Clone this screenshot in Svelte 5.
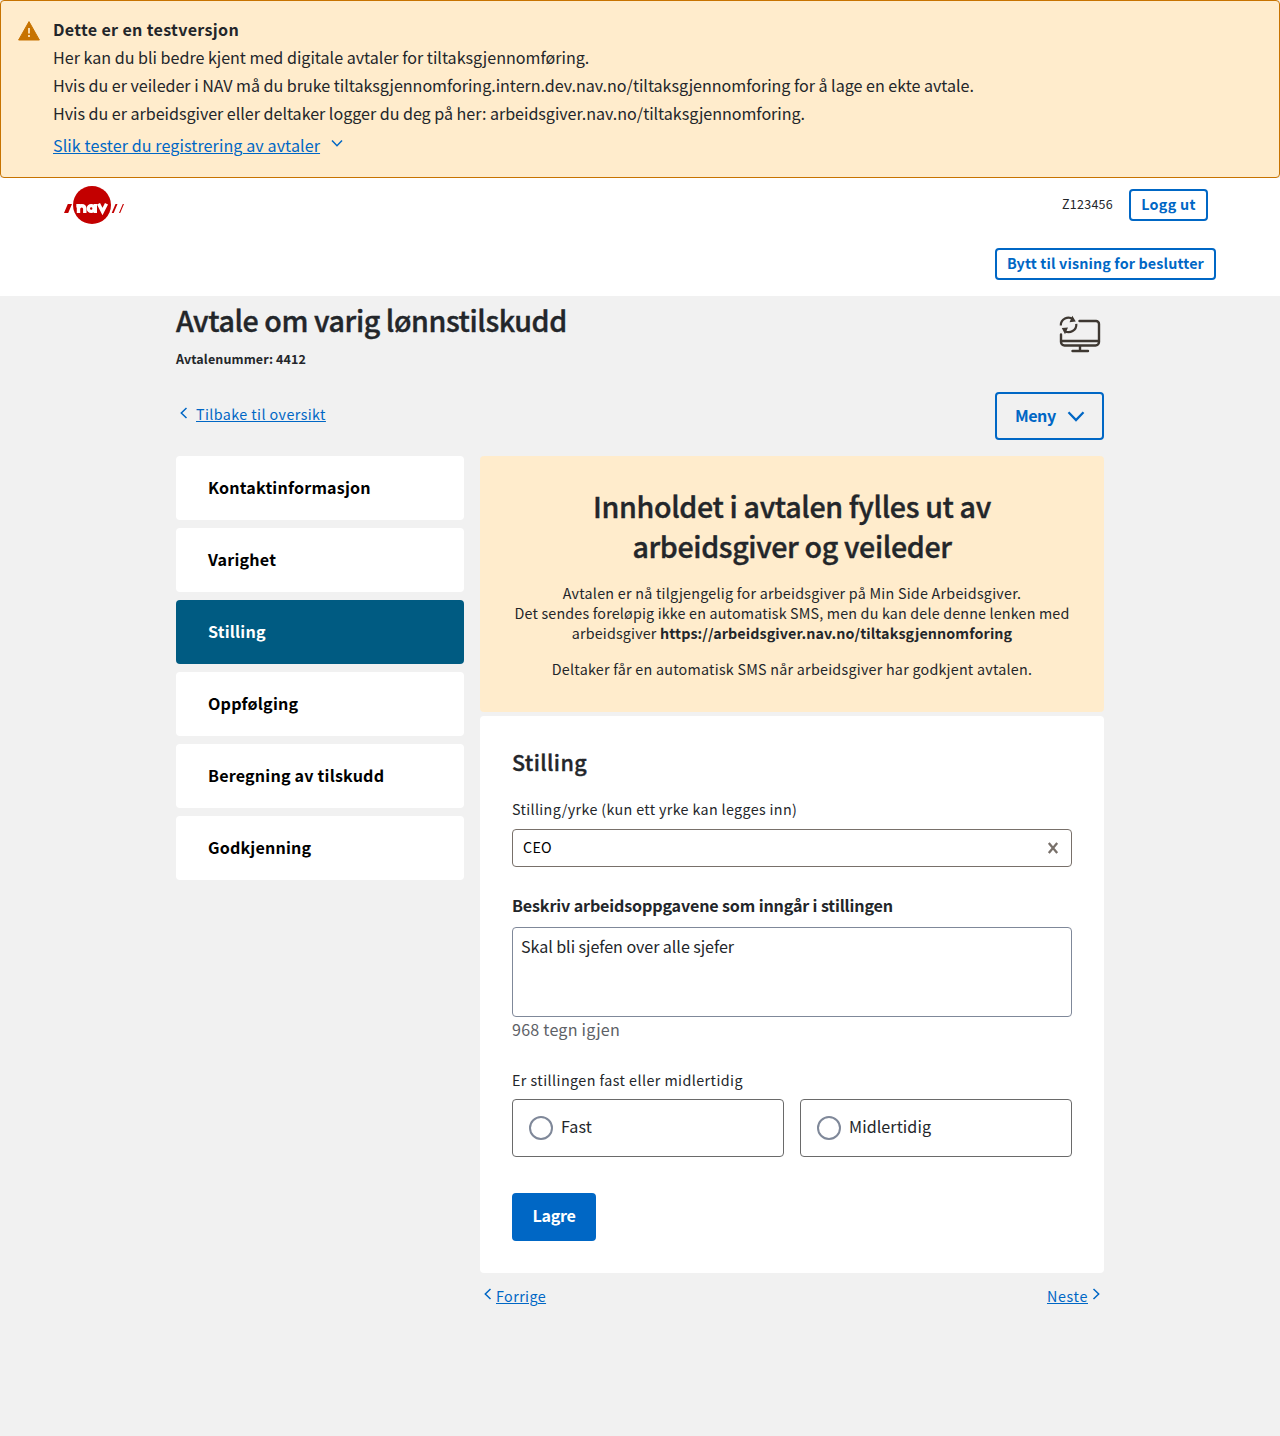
<script>
  const steps = ['Kontaktinformasjon', 'Varighet', 'Stilling', 'Oppfølging', 'Beregning av tilskudd', 'Godkjenning'];
  const active = 'Stilling';
</script>

{#snippet chevron(kind)}
  <svg class="chev {kind}" viewBox="0 0 12 12" aria-hidden="true">
    <path d="M1 3.500 6 8.700 11 3.500" fill="none" stroke="currentColor" stroke-width="1.500" />
  </svg>
{/snippet}

<section class="alert">
  <svg class="warn" viewBox="0 0 22 20" aria-hidden="true">
    <path d="M11 .6 21.400 19H.6Z" fill="#c77300" stroke="#c77300" stroke-width="1" stroke-linejoin="round" />
    <path d="M11 7v5.600M11 14v2" stroke="#ffeccc" stroke-width="1.700" />
  </svg>
  <div>
    <strong>Dette er en testversjon</strong>
    <p>Her kan du bli bedre kjent med digitale avtaler for tiltaksgjennomføring.</p>
    <p class="tight">Hvis du er veileder i NAV må du bruke tiltaksgjennomforing.intern.dev.nav.no/tiltaksgjennomforing for å lage en ekte avtale.</p>
    <p class="tight">Hvis du er arbeidsgiver eller deltaker logger du deg på her: arbeidsgiver.nav.no/tiltaksgjennomforing.</p>
    <div class="more"><a href="#hjelp">Slik tester du registrering av avtaler</a>{@render chevron('down')}</div>
  </div>
</section>

<header>
  <div class="top">
    <svg class="logo" viewBox="0 0 60 38" role="img" aria-label="NAV">
      <circle cx="28" cy="19" r="19" fill="#c30000" />
      <path d="M3.800 18h4.200L4.200 27H0ZM51.500 18h2L49.700 27h-2ZM58.800 18h1.200L56.200 27h-1.200Z" fill="#c30000" />
      <g fill="none" stroke="#fff" stroke-width="3.400">
        <path d="M14.500 27V18M12.300 19.700H16M14.500 23Q14.500 19.700 17.800 19.700 20.800 19.700 20.800 23V27" />
        <circle cx="27.200" cy="22.500" r="2.900" />
        <path d="M31.300 18V27" />
        <path d="M34.500 17.800 38.500 25.500 42.500 17.800" />
      </g>
    </svg>
    <div class="user"><span class="ident">Z123456</span><button class="small logout">Logg ut</button></div>
  </div>
  <div class="switch"><button class="small">Bytt til visning for beslutter</button></div>
</header>

<main>
  <div class="title">
    <div>
      <h1>Avtale om varig lønnstilskudd</h1>
      <p class="number">Avtalenummer: 4412</p>
    </div>
    <svg class="screen" viewBox="0 0 42 40" fill="none" stroke="#3e3832" stroke-width="2.400" aria-hidden="true">
      <path d="M20.500 6H37a3 3 0 0 1 3 3V27a3.500 3.500 0 0 1-3.500 3.500H5.500A3.500 3.500 0 0 1 2 27V19.500M2 26H40M21 30.500V36M13.500 36H29" stroke-linecap="round" />
      <path d="M1.800 10.500A7.600 7.600 0 0 1 14 4.300M17.300 8.800A7.600 7.600 0 0 1 5.500 15.800" stroke-width="2.200" />
      <path d="M13.300.8 16.800 6.500 10.500 7.300ZM2.800 13 9 12.400 6 19.300Z" fill="#3e3832" stroke="none" />
    </svg>
  </div>

  <div class="tools">
    <div class="back">{@render chevron('left')}<a href="#oversikt">Tilbake til oversikt</a></div>
    <button class="menu">Meny{@render chevron('big')}</button>
  </div>

  <div class="columns">
    <nav>
      {#each steps as step}
        <a class="step" class:active={step === active} href="#steg">{step}</a>
      {/each}
    </nav>
    <div class="content">
      <section class="info">
        <h2>Innholdet i avtalen fylles ut av<br />arbeidsgiver og veileder</h2>
        <p>Avtalen er nå tilgjengelig for arbeidsgiver på Min Side Arbeidsgiver.<br /><span class="dense">Det sendes foreløpig ikke en automatisk SMS, men du kan dele denne lenken med</span><br /><span class="dense">arbeidsgiver</span> <b>https://arbeidsgiver.nav.no/tiltaksgjennomforing</b></p>
        <p>Deltaker får en automatisk SMS når arbeidsgiver har godkjent avtalen.</p>
      </section>
      <section class="form">
        <h3>Stilling</h3>
        <div class="label">Stilling/yrke (kun ett yrke kan legges inn)</div>
        <div class="select"><span>CEO</span>
          <svg viewBox="0 0 12 12" aria-hidden="true"><path d="M1.800 1 10.200 11M10.200 1 1.800 11" stroke="#78706a" stroke-width="2.300" /></svg>
        </div>
        <div class="label strong">Beskriv arbeidsoppgavene som inngår i stillingen</div>
        <div class="area">Skal bli sjefen over alle sjefer</div>
        <div class="count">968 tegn igjen</div>
        <div class="label second">Er stillingen fast eller midlertidig</div>
        <div class="radios">
          <div class="radio"><i></i><span>Fast</span></div>
          <div class="radio"><i></i><span>Midlertidig</span></div>
        </div>
        <button class="save">Lagre</button>
      </section>
      <div class="pager">
        <div>{@render chevron('left')}<a href="#forrige">Forrige</a></div>
        <div><a class="next" href="#neste">Neste</a>{@render chevron('right')}</div>
      </div>
    </div>
  </div>
</main>

<style>
  :global(body) {
    background: #f1f1f1;
    color: #23262a;
    font: 16.1px/28px 'Noto Sans CJK SC', 'Noto Sans CJK JP', sans-serif;
  }
  :global(#app) { min-height: 1436px; }
  * { box-sizing: border-box; }
  p, h1, h2, h3 { margin: 0; }
  a { color: #0067c5; text-decoration: underline; text-decoration-thickness: 1px; text-underline-offset: 1px; }
  button { font-family: inherit; font-weight: 700; color: #0067c5; background: #fff; border: 2px solid #0067c5; border-radius: 4px; white-space: nowrap; }
  strong, b { font-weight: 700; }
  svg { display: block; flex: none; }

  .alert { display: flex; gap: 13px; height: 178px; padding: 14px 17px; border: 1px solid #c77300; border-radius: 4px; background: #ffeccc; }
  .warn { width: 22px; height: 20px; margin-top: 6px; }
  .alert strong { display: block; letter-spacing: 0.32px; }
  .tight { letter-spacing: -0.025px; }
  .more { display: flex; gap: 11px; margin-top: 4px; letter-spacing: 0.09px; }
  .chev { width: 12px; height: 12px; color: #0067c5; }
  .chev.down { margin-top: 6px; }
  .chev.left { transform: rotate(90deg); }
  .chev.right { transform: rotate(-90deg); }
  .chev.big { width: 18px; height: 18px; }

  header { height: 118px; background: #fff; }
  .top { display: flex; justify-content: space-between; height: 54px; padding: 8px 72px 0 64px; }
  .logo { width: 60px; height: 38px; }
  .user { display: flex; align-items: center; gap: 16px; height: 38px; }
  .ident { padding-bottom: 2px; font-size: 12.5px; letter-spacing: 0.26px; }
  .small { height: 32px; padding: 0 10px 2px; font-size: 14.3px; line-height: 24px; letter-spacing: 0.147px; }
  .logout { width: 79px; letter-spacing: 0.3px; }
  .switch { display: flex; justify-content: flex-end; padding: 16px 64px 0; }

  main { width: 928px; margin: 0 auto; }
  .title { display: flex; justify-content: space-between; height: 96px; padding-top: 4px; }
  h1, h2 { font-size: 28.6px; line-height: 40px; font-weight: 500; letter-spacing: -0.42px; -webkit-text-stroke: 0.4px currentColor; }
  h2 { letter-spacing: -0.355px; }
  .number { margin-top: 9px; font-size: 12.5px; line-height: 20px; font-weight: 700; letter-spacing: 0.12px; }
  .screen { width: 42px; height: 40px; margin: 15px 3px 0 0; }
  .tools { display: flex; justify-content: space-between; height: 64px; }
  .back { display: flex; align-items: flex-start; gap: 6px; padding: 11px 0 0 2px; font-size: 14.3px; line-height: 22px; letter-spacing: 0.42px; }
  .back .chev { margin-top: 4px; }
  .menu { display: flex; align-items: center; gap: 11px; width: 109px; height: 48px; padding: 0 0 3px 18px; background: transparent; font-size: 16.1px; line-height: 28px; letter-spacing: -0.5px; }
  .menu .chev { margin-top: 3px; }

  .columns { display: grid; grid-template-columns: 288px 624px; gap: 16px; align-items: start; }
  nav { display: grid; gap: 8px; }
  .step { height: 64px; padding: 17px 32px; border-radius: 4px; background: #fff; color: #000; font-weight: 700; letter-spacing: 0.19px; text-decoration: none; }
  .step.active { background: #005b82; color: #fff; }
  .info { height: 256px; padding: 30px 32px; border-radius: 4px; background: #ffeccc; text-align: center; white-space: nowrap; }
  .info p { margin-top: 16px; font-size: 14.3px; line-height: 20px; letter-spacing: 0.25px; }
  .info h2 + p { margin-top: 17px; }
  .info .dense { letter-spacing: 0.175px; }
  .info b { letter-spacing: 0.1px; }
  .form { height: 557px; margin-top: 4px; padding: 30px 32px; border-radius: 4px; background: #fff; }
  h3 { font-size: 21.5px; line-height: 32px; font-weight: 500; letter-spacing: 0.37px; -webkit-text-stroke: 0.35px currentColor; }
  .label { margin-top: 21px; font-size: 14.3px; line-height: 20px; letter-spacing: 0.35px; }
  .select { display: flex; align-items: center; justify-content: space-between; height: 38px; margin-top: 10px; padding: 0 12px 0 10px; border: 1px solid #78706a; border-radius: 4px; color: #000; font-size: 14.3px; letter-spacing: 0.27px; }
  .select span { padding-bottom: 2px; }
  .select svg { width: 12px; height: 12px; }
  .label.strong { margin-top: 24px; font-size: 16.1px; line-height: 28px; font-weight: 700; letter-spacing: -0.146px; }
  .area { height: 90px; margin-top: 8px; padding: 4px 8px; border: 1px solid #7f8899; border-radius: 4px; letter-spacing: -0.06px; }
  .count { margin-top: -2px; color: #5d6166; letter-spacing: 0.23px; }
  .label.second { margin-top: 27px; letter-spacing: 0.44px; }
  .radios { display: grid; grid-template-columns: 1fr 1fr; gap: 16px; margin-top: 9px; }
  .radio { display: flex; align-items: center; gap: 8px; height: 58px; padding-left: 16px; border: 1px solid #6a6a6a; border-radius: 4px; letter-spacing: 0.08px; }
  .radio span { padding-bottom: 4px; }
  .radio i { width: 24px; height: 24px; border: 2px solid #7f8899; border-radius: 50%; }
  .save { width: 84px; height: 48px; margin-top: 36px; padding: 0 0 4px; background: #0067c5; color: #fff; font-size: 16.1px; line-height: 28px; letter-spacing: -0.3px; }
  .pager { display: flex; justify-content: space-between; padding: 11px 2px 0; font-size: 14.3px; line-height: 24px; letter-spacing: 0.42px; }
  .pager div { display: flex; gap: 2px; }
  .pager .chev { margin-top: 4px; }
  .next { letter-spacing: 0.66px; }
</style>
